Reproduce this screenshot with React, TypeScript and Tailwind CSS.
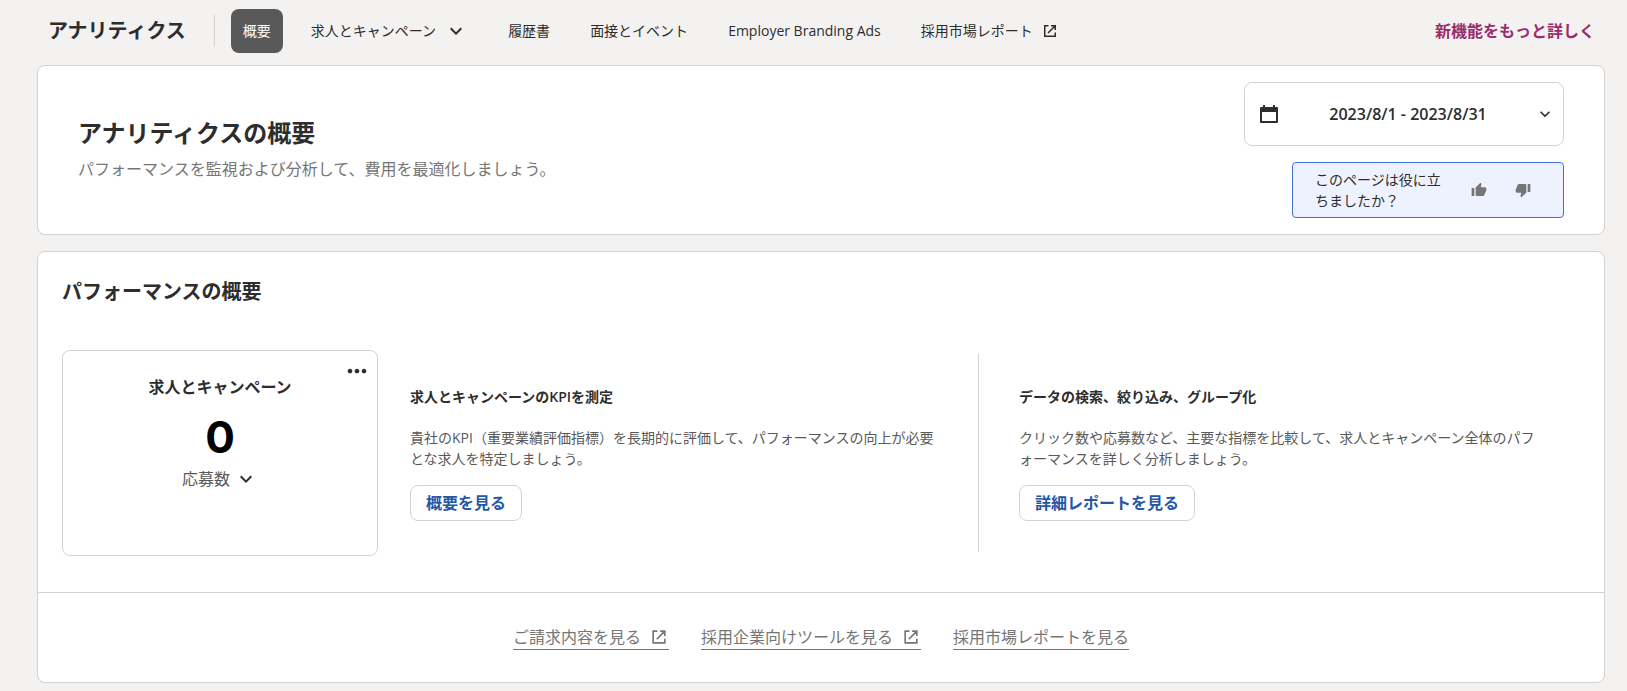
import { MdExpandMore, MdMoreHoriz, MdThumbDown, MdThumbUp } from "react-icons/md";

const NAV_ITEMS = [
  { label: "概要", active: true },
  { label: "求人とキャンペーン", menu: true },
  { label: "履歴書" },
  { label: "面接とイベント" },
  { label: "Employer Branding Ads" },
  { label: "採用市場レポート", external: true },
];

const FEATURES = [
  {
    title: "求人とキャンペーンのKPIを測定",
    description:
      "貴社のKPI（重要業績評価指標）を長期的に評価して、パフォーマンスの向上が必要とな求人を特定しましょう。",
    cta: "概要を見る",
  },
  {
    title: "データの検索、絞り込み、グループ化",
    description:
      "クリック数や応募数など、主要な指標を比較して、求人とキャンペーン全体のパフォーマンスを詳しく分析しましょう。",
    cta: "詳細レポートを見る",
  },
];

const FOOTER_LINKS = [
  { label: "ご請求内容を見る", external: true },
  { label: "採用企業向けツールを見る", external: true },
  { label: "採用市場レポートを見る" },
];

function ExternalIcon({ className }: { className: string }) {
  return (
    <svg viewBox="0 0 18 18" fill="none" stroke="currentColor" strokeWidth="1.5" className={className} aria-hidden="true">
      <path d="M7.5 3.75H3.75v10.5h10.5V10.5M10 3.75h4.25V8M14 4 7 11" />
    </svg>
  );
}

function CalendarIcon() {
  return (
    <svg viewBox="0 0 24 24" className="size-6 shrink-0" aria-hidden="true">
      <path
        fill="currentColor"
        fillRule="evenodd"
        d="M6 3h2v2h8V3h2v2h2a1 1 0 0 1 1 1v14a1 1 0 0 1-1 1H4a1 1 0 0 1-1-1V6a1 1 0 0 1 1-1h2zM5 10v9h14v-9z"
      />
    </svg>
  );
}

function Header() {
  return (
    <header className="flex items-center justify-between pt-[9px] pr-8 pb-3 pl-12">
      <div className="flex items-center">
        <div className="text-xl leading-7 font-semibold">アナリティクス</div>
        <div className="ml-7 h-8 w-px bg-[#d4d2d0]" />
        <nav className="ml-4 flex gap-4">
          {NAV_ITEMS.map((item) => (
            <a
              key={item.label}
              href="#"
              className={
                item.active
                  ? "flex h-11 items-center rounded-lg bg-[#595959] px-3 text-sm text-white"
                  : "flex h-11 items-center gap-2 px-3 text-sm"
              }
            >
              {item.label}
              {item.menu && <MdExpandMore className="size-6" />}
              {item.external && <ExternalIcon className="size-[18px]" />}
            </a>
          ))}
        </nav>
      </div>
      <a href="#" className="font-semibold text-[#9d2b6b]">
        新機能をもっと詳しく
      </a>
    </header>
  );
}

function Intro() {
  return (
    <section className="flex justify-between rounded-lg border border-[#d4d2d0] bg-white px-10 py-4">
      <div className="flex flex-col justify-center">
        <h1 className="text-2xl leading-9 font-semibold">アナリティクスの概要</h1>
        <p className="mt-0.5 leading-8 text-[#767676]">
          パフォーマンスを監視および分析して、費用を最適化しましょう。
        </p>
      </div>
      <div className="flex flex-col items-end gap-4">
        <button
          type="button"
          className="flex h-16 w-80 items-center rounded-lg border border-[#d4d2d0] pr-2 pl-3 font-semibold"
        >
          <CalendarIcon />
          <span className="grow">2023/8/1 - 2023/8/31</span>
          <MdExpandMore className="size-5" />
        </button>
        <div className="flex h-14 w-[272px] items-center rounded-sm border border-[#3f73d3] bg-[#eef1fe] pl-[22px] text-sm leading-[21px]">
          <p className="w-32">このページは役に立ちましたか？</p>
          <button type="button" aria-label="はい" className="ml-7 text-[#767676]">
            <MdThumbUp className="size-4" />
          </button>
          <button type="button" aria-label="いいえ" className="ml-7 text-[#767676]">
            <MdThumbDown className="size-4" />
          </button>
        </div>
      </div>
    </section>
  );
}

function Kpi() {
  return (
    <div className="relative flex w-[316px] shrink-0 flex-col items-center rounded-lg border border-[#d4d2d0] pt-6">
      <button type="button" aria-label="その他" className="absolute top-1.5 right-1.5">
        <MdMoreHoriz className="size-7" />
      </button>
      <h3 className="leading-6 font-semibold">求人とキャンペーン</h3>
      <div className="mt-3 font-['Inter',sans-serif] text-[44px] leading-[52px] font-bold text-black">0</div>
      <button type="button" className="mt-1 flex items-center gap-1">
        <span className="text-[#595959]">応募数</span>
        <MdExpandMore className="size-6" />
      </button>
    </div>
  );
}

function Performance() {
  return (
    <section className="mt-4 rounded-lg border border-[#d4d2d0] bg-white">
      <h2 className="px-6 pt-6 text-xl leading-8 font-semibold">パフォーマンスの概要</h2>
      <div className="mx-6 mt-[42px] flex min-h-[206px]">
        <Kpi />
        <div className="my-1 grid grow grid-cols-2">
          {FEATURES.map((feature, index) => (
            <div
              key={feature.title}
              className={
                index === 0
                  ? "border-r border-[#d4d2d0] pt-8 pr-10 pl-8"
                  : "px-10 pt-8"
              }
            >
              <h3 className="text-sm leading-[21px] font-semibold">{feature.title}</h3>
              <p className="mt-5 text-sm leading-[21px] text-[#595959]">{feature.description}</p>
              <button
                type="button"
                className="mt-4 h-9 rounded-lg border border-[#d4d2d0] px-[15px] font-bold text-[#2557a7]"
              >
                {feature.cta}
              </button>
            </div>
          ))}
        </div>
      </div>
      <div className="mt-9 flex justify-center gap-8 border-t border-[#d4d2d0] py-8">
        {FOOTER_LINKS.map((link) => (
          <a
            key={link.label}
            href="#"
            className="flex items-center gap-2 border-b border-[#767676] leading-6 text-[#767676]"
          >
            {link.label}
            {link.external && <ExternalIcon className="size-5" />}
          </a>
        ))}
      </div>
    </section>
  );
}

export default function App() {
  return (
    <div
      lang="ja"
      className="min-h-screen bg-[#f3f2f1] font-['Open_Sans','Noto_Sans_CJK_JP',sans-serif] text-[#2d2d2d]"
    >
      <Header />
      <main className="pr-[22px] pb-2 pl-[37px]">
        <Intro />
        <Performance />
      </main>
    </div>
  );
}
